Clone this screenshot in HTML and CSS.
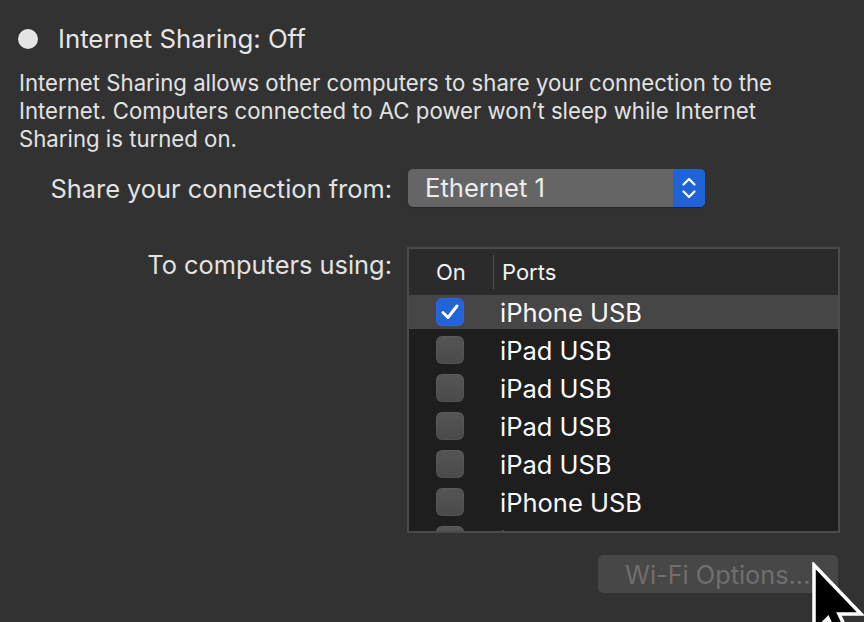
FILE: index.html
```html
<!DOCTYPE html>
<html>
<head>
    <meta charset="UTF-8">
    <title>Sharing | Internet Sharing</title>
    <link rel="stylesheet" href="styles.css">
</head>
<body>
    <div class="pane">
        <div class="status">
            <span class="dot"></span>
            <h1>Internet Sharing: Off</h1>
        </div>
        <p class="desc">Internet Sharing allows other computers to share your connection to the Internet. Computers connected to AC power won’t sleep while Internet Sharing is turned on.</p>

        <div class="field">
            <label>Share your connection from:</label>
            <div class="popup">
                <span class="popup-text">Ethernet 1</span>
                <span class="popup-arrows">
                    <svg width="18" height="26" viewBox="0 0 18 26"><path d="M3.5 9.5 L9 4 L14.5 9.5 M3.5 16.5 L9 22 L14.5 16.5" fill="none" stroke="#fff" stroke-width="2.2" stroke-linecap="round" stroke-linejoin="round"/></svg>
                </span>
            </div>
        </div>

        <div class="field field-top">
            <label>To computers using:</label>
            <div class="right-col">
                <div class="ports">
                    <div class="ports-head">
                        <span class="col-on">On</span>
                        <span class="col-sep"></span>
                        <span class="col-ports">Ports</span>
                    </div>
                    <div class="ports-body">
                        <div class="port selected"><span class="check on"><svg width="24" height="24" viewBox="0 0 24 24"><path d="M5 12.5 L10 17.5 L19 6" fill="none" stroke="#fff" stroke-width="3" stroke-linecap="round" stroke-linejoin="round"/></svg></span><span class="port-name">iPhone USB</span></div>
                        <div class="port"><span class="check"></span><span class="port-name">iPad USB</span></div>
                        <div class="port"><span class="check"></span><span class="port-name">iPad USB</span></div>
                        <div class="port"><span class="check"></span><span class="port-name">iPad USB</span></div>
                        <div class="port"><span class="check"></span><span class="port-name">iPad USB</span></div>
                        <div class="port"><span class="check"></span><span class="port-name">iPhone USB</span></div>
                        <div class="port"><span class="check"></span><span class="port-name">iPad USB</span></div>
                    </div>
                </div>
                <button class="wifi-btn" disabled>Wi-Fi Options...</button>
            </div>
        </div>
    </div>

    <svg class="cursor" width="56" height="62" viewBox="0 0 56 62">
        <path d="M3 3 L3 70 L17 56 L27 78 L38 73 L28 52 L50 52 Z" fill="#000" stroke="#fff" stroke-width="3.5" stroke-linejoin="miter"/>
    </svg>
</body>
</html>
```

FILE: styles.css
```css
body {
    margin: 0;
    background: #323232;
    font-family: Inter, "Noto Sans", sans-serif;
    color: #e2e2e2;
    overflow: hidden;
}

.pane {
    padding: 23px 0 0 19px;
    width: 821px;
}

.status {
    display: flex;
    align-items: center;
    gap: 20px;
}
.dot {
    width: 20px;
    height: 20px;
    border-radius: 50%;
    background: #e4e4e4;
    margin-left: -1px;
}
.status h1 {
    margin: 0;
    font-size: 25.8px;
    font-weight: 400;
    line-height: 31px;
    color: #e6e6e6;
}

.desc {
    margin: 15px 0 0 0;
    font-size: 22.2px;
    line-height: 28px;
    width: 766px;
}

.field {
    display: grid;
    grid-template-columns: 373px auto;
    column-gap: 16px;
    align-items: center;
    margin-top: 16px;
}
.field label {
    text-align: right;
    font-size: 25.4px;
}
.field-top {
    align-items: start;
    margin-top: 40px;
}
.field-top label {
    margin-top: 2px;
}

.popup {
    display: flex;
    width: 297px;
    height: 38px;
    border-radius: 5px;
    background: #656565;
    overflow: hidden;
    box-shadow: 0 1px 1px rgba(0,0,0,0.3);
}
.popup-text {
    flex: 1;
    padding-left: 17px;
    font-size: 25.6px;
    line-height: 38px;
    color: #ececec;
}
.popup-arrows {
    width: 32px;
    background: #1f63d6;
    display: flex;
    align-items: center;
    justify-content: center;
}

.right-col {
    display: flex;
    flex-direction: column;
    align-items: flex-end;
    margin-left: -1px;
}
.ports {
    width: 429px;
    height: 282px;
    border: 2px solid #4b4b4b;
    background: #1e1e1e;
    overflow: hidden;
}
.ports-head {
    display: flex;
    align-items: center;
    height: 46px;
    background: #2b2b2b;
    font-size: 22px;
    color: #f2f2f2;
}
.col-on {
    width: 57px;
    padding-left: 27px;
}
.col-sep {
    width: 1px;
    height: 34px;
    background: #505050;
}
.col-ports {
    padding-left: 8px;
}

.port {
    display: flex;
    align-items: center;
    height: 38px;
}
.port.selected {
    height: 34px;
    margin-bottom: 2px;
    background: #464646;
}
.check {
    width: 28px;
    height: 28px;
    margin-left: 27px;
    border-radius: 6px;
    background: linear-gradient(#555, #4a4a4a);
    box-shadow: inset 0 0 0 1px rgba(255,255,255,0.04);
    display: flex;
    align-items: center;
    justify-content: center;
}
.check.on {
    background: #2464d9;
}
.port-name {
    margin-left: 36px;
    font-size: 25.5px;
    color: #fafafa;
}

.wifi-btn {
    margin-top: 22px;
    width: 240px;
    height: 38px;
    margin-right: 2px;
    border: none;
    border-radius: 5px;
    background: #474747;
    color: #6f6f6f;
    font-family: Inter, "Noto Sans", sans-serif;
    font-size: 25.3px;
    text-align: left;
    padding-left: 27px;
}

.cursor {
    position: absolute;
    left: 811px;
    top: 562px;
}
```
